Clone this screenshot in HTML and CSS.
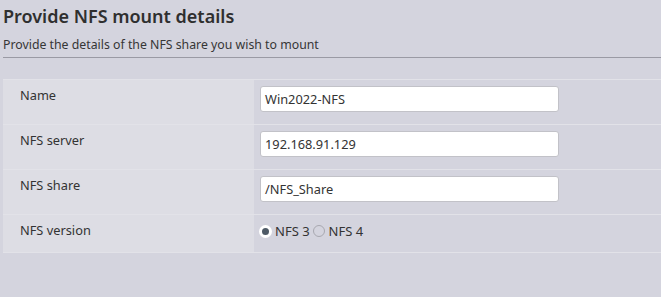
FILE: index.html
```html
<!DOCTYPE html>
<html>
<head>
<meta charset="utf-8">
<link rel="stylesheet" href="styles.css">
</head>
<body>
<div class="page">
  <h1 class="title">Provide NFS mount details</h1>
  <p class="subtitle">Provide the details of the NFS share you wish to mount</p>
  <div class="divider"></div>
  <div class="form">
    <div class="row">
      <div class="label">Name</div>
      <div class="value"><div class="input">Win2022-NFS</div></div>
    </div>
    <div class="row">
      <div class="label">NFS server</div>
      <div class="value"><div class="input">192.168.91.129</div></div>
    </div>
    <div class="row">
      <div class="label">NFS share</div>
      <div class="value"><div class="input">/NFS_Share</div></div>
    </div>
    <div class="row row-last">
      <div class="label">NFS version</div>
      <div class="value radios">
        <span class="radio checked"></span><span class="rlabel">NFS 3</span>
        <span class="radio"></span><span class="rlabel">NFS 4</span>
      </div>
    </div>
  </div>
</div>
</body>
</html>
```

FILE: styles.css
```css
html, body {
  margin: 0;
  padding: 0;
  background: #d4d4de;
}
body {
  font-family: "Noto Sans", "Open Sans", sans-serif;
  color: #323232;
}
.page {
  padding: 0 0 0 3px;
}
.title {
  margin: 0;
  padding-top: 4px;
  font-size: 18px;
  line-height: 24px;
  font-weight: 600;
  color: #2f2f2f;
}
.subtitle {
  margin: 0;
  padding-top: 8px;
  font-size: 12.3px;
  line-height: 17px;
  color: #363636;
}
.divider {
  margin-top: 4px;
  height: 1px;
  background: #9a9aa4;
}
.form {
  margin-top: 21px;
  border-top: 1px solid #e2e2e8;
}
.row {
  display: flex;
  height: 44px;
  border-bottom: 1px solid #e2e2e8;
}
.row-last {
  height: 37px;
}
.label {
  width: 234px;
  flex: none;
  background: #dddde4;
  padding: 7px 0 0 17px;
  font-size: 12.8px;
  line-height: 16px;
  color: #333;
}
.value {
  flex: 1;
  padding: 6px 0 0 6px;
}
.input {
  box-sizing: border-box;
  width: 299px;
  height: 26px;
  background: #fff;
  border: 1px solid #c2c2c8;
  border-radius: 3px;
  padding: 0 0 0 4px;
  font-size: 12.8px;
  line-height: 24px;
  color: #333;
}
.radios {
  display: flex;
  align-items: center;
  align-self: flex-start;
  padding-top: 7px;
  padding-left: 5px;
  font-size: 13px;
}
.radio {
  box-sizing: border-box;
  width: 12px;
  height: 12px;
  border-radius: 50%;
  border: 1px solid #a8a8b0;
  margin-right: 4px;
}
.radio.checked {
  border: 3px solid #fff;
  background: #4e5a66;
  width: 13px;
  height: 13px;
  margin-right: 3px;
}
.rlabel {
  margin-right: 3px;
  color: #333;
}
```
